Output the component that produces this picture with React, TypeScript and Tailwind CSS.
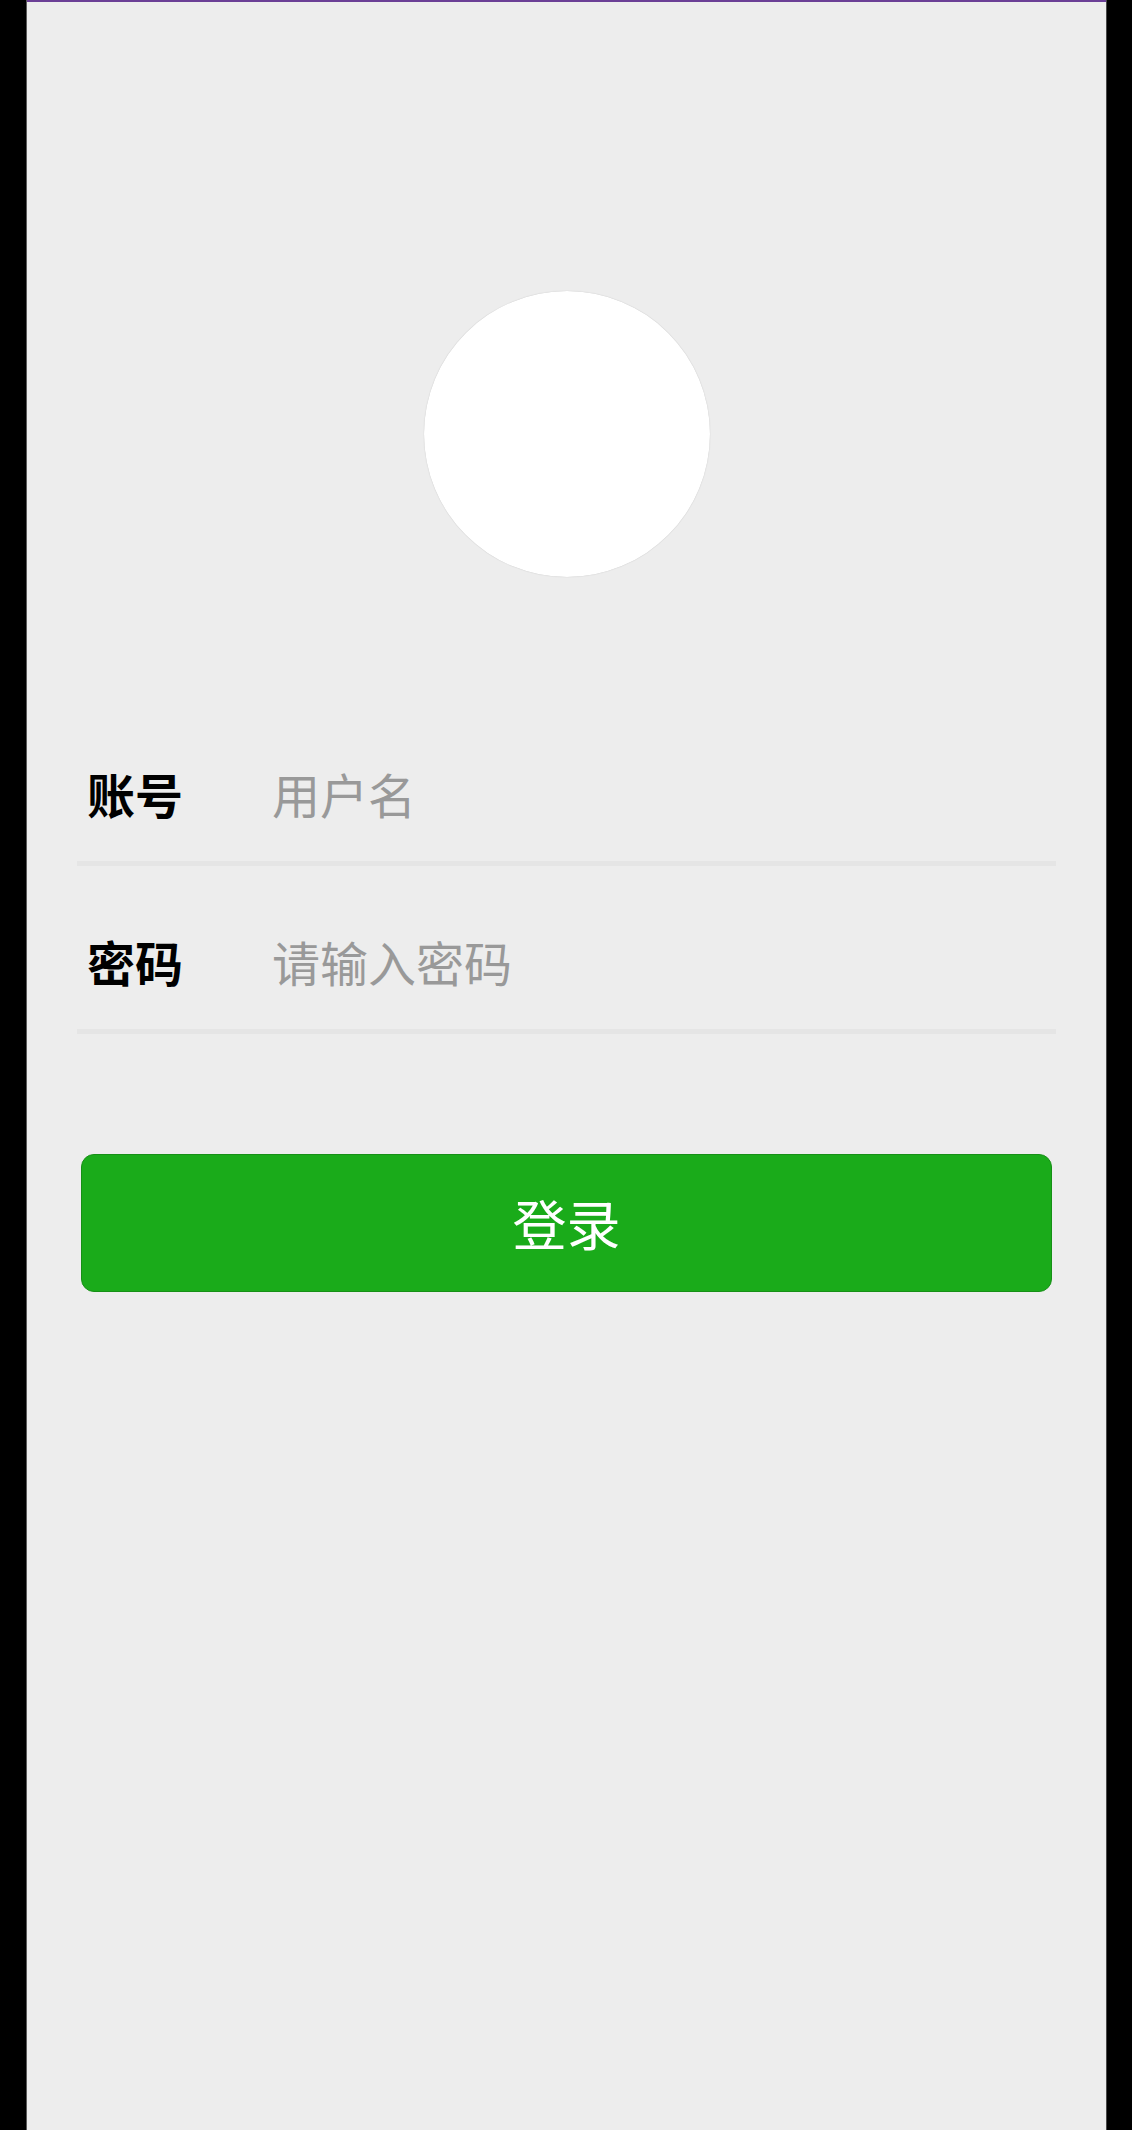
export default function App() {
  const font = { fontFamily: '"Noto Sans CJK SC", "Noto Sans", sans-serif' };

  return (
    <div className="flex w-[1132px] h-[2130px] bg-black" style={font}>
      <div className="w-[26px] shrink-0 bg-black" />
      <div className="flex flex-col w-[1080px] bg-[#ededed] border-l border-[#5a5a5a]">
        <div className="h-[2px] bg-[#6b3f96]" />

        {/* avatar */}
        <div className="flex justify-center mt-[289px]">
          <div className="w-[286px] h-[286px] rounded-full bg-white shadow-[0_0_1px_rgba(0,0,0,0.25)]" />
        </div>

        {/* form */}
        <div className="flex flex-col mt-[121px] px-[50px]">
          <div className="flex items-center h-[163px] pt-[27px] pl-[10px]">
            <label className="w-[185px] text-[48px] font-bold text-black leading-none">账号</label>
            <input
              className="flex-1 bg-transparent outline-none text-[48px] text-black leading-none placeholder:text-[#999999]"
              placeholder="用户名"
            />
          </div>
          <div className="h-[5px] bg-[#e5e5e5]" />
          <div className="flex items-center h-[163px] pt-[27px] pl-[10px]">
            <label className="w-[185px] text-[48px] font-bold text-black leading-none">密码</label>
            <input
              type="password"
              className="flex-1 bg-transparent outline-none text-[48px] text-black leading-none placeholder:text-[#999999]"
              placeholder="请输入密码"
            />
          </div>
          <div className="h-[5px] bg-[#e5e5e5]" />
        </div>

        <div className="mt-[120px] px-[54px]">
          <button className="w-full h-[138px] rounded-[13px] bg-[#1aab1a] border border-[#169016] text-white text-[54px] leading-none">
            登录
          </button>
        </div>
      </div>
      <div className="flex-1 bg-black border-l border-[#4a4a4a]" />
    </div>
  );
}
